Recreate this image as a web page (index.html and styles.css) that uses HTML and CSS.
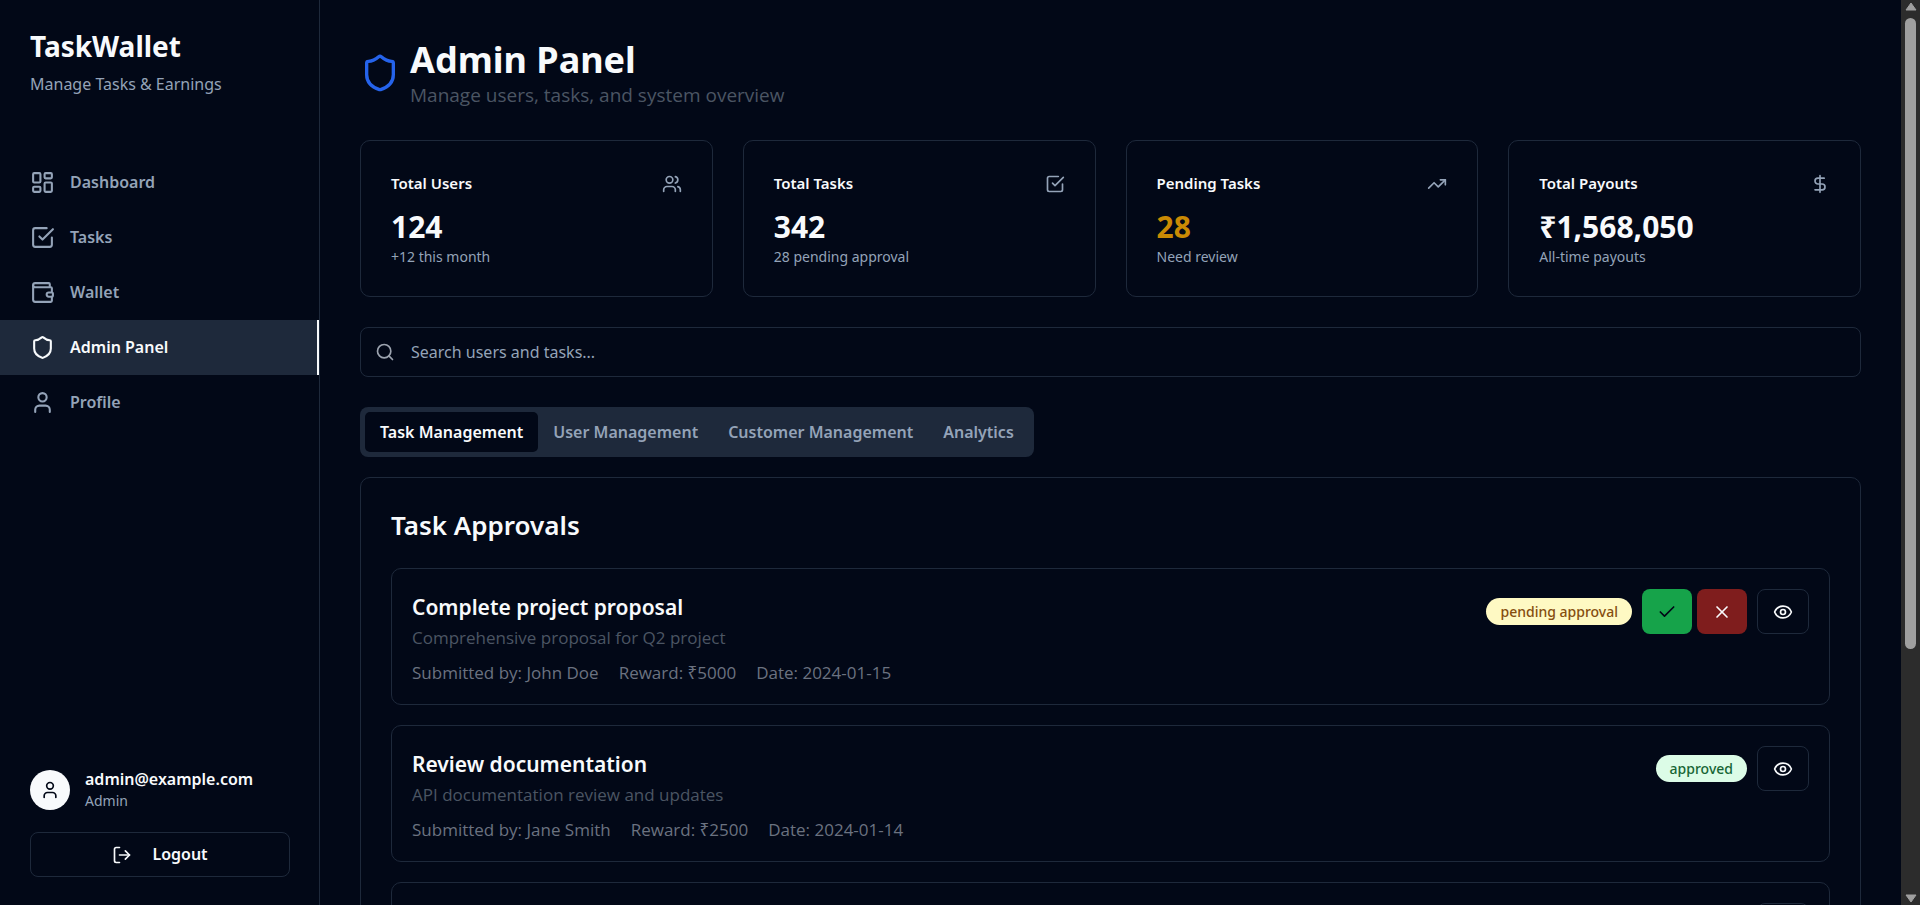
FILE: index.html
```html
<!DOCTYPE html>
<html lang="en">
<head>
<meta charset="utf-8">
<meta name="viewport" content="width=device-width, initial-scale=1">
<title>TaskWallet – Admin Panel</title>
<link rel="stylesheet" href="styles.css">
</head>
<body>
<svg class="sprite" aria-hidden="true">
  <symbol id="i-dashboard" viewBox="0 0 24 24"><rect width="7" height="9" x="3" y="3" rx="1"/><rect width="7" height="5" x="14" y="3" rx="1"/><rect width="7" height="9" x="14" y="12" rx="1"/><rect width="7" height="5" x="3" y="16" rx="1"/></symbol>
  <symbol id="i-check-square" viewBox="0 0 24 24"><path d="m9 11 3 3L22 4"/><path d="M21 12v7a2 2 0 0 1-2 2H5a2 2 0 0 1-2-2V5a2 2 0 0 1 2-2h11"/></symbol>
  <symbol id="i-wallet" viewBox="0 0 24 24"><path d="M19 7V4a1 1 0 0 0-1-1H5a2 2 0 0 0 0 4h15a1 1 0 0 1 1 1v4h-3a2 2 0 0 0 0 4h3a1 1 0 0 0 1-1v-2a1 1 0 0 0-1-1"/><path d="M3 5v14a2 2 0 0 0 2 2h15a1 1 0 0 0 1-1v-4"/></symbol>
  <symbol id="i-shield" viewBox="0 0 24 24"><path d="M20 13c0 5-3.5 7.5-7.66 8.95a1 1 0 0 1-.67-.01C7.5 20.5 4 18 4 13V6a1 1 0 0 1 1-1c2 0 4.5-1.2 6.24-2.72a1.17 1.17 0 0 1 1.52 0C14.51 3.81 17 5 19 5a1 1 0 0 1 1 1z"/></symbol>
  <symbol id="i-user" viewBox="0 0 24 24"><path d="M19 21v-2a4 4 0 0 0-4-4H9a4 4 0 0 0-4 4v2"/><circle cx="12" cy="7" r="4"/></symbol>
  <symbol id="i-users" viewBox="0 0 24 24"><path d="M16 21v-2a4 4 0 0 0-4-4H6a4 4 0 0 0-4 4v2"/><circle cx="9" cy="7" r="4"/><path d="M22 21v-2a4 4 0 0 0-3-3.87"/><path d="M16 3.13a4 4 0 0 1 0 7.75"/></symbol>
  <symbol id="i-trend" viewBox="0 0 24 24"><path d="M22 7l-8.500 8.500-5-5L2 17"/><path d="M16 7h6v6"/></symbol>
  <symbol id="i-dollar" viewBox="0 0 24 24"><path d="M12 2v20"/><path d="M17 5H9.500a3.500 3.500 0 0 0 0 7h5a3.500 3.500 0 0 1 0 7H6"/></symbol>
  <symbol id="i-search" viewBox="0 0 24 24"><circle cx="11" cy="11" r="8"/><path d="m21 21-4.300-4.300"/></symbol>
  <symbol id="i-logout" viewBox="0 0 24 24"><path d="M9 21H5a2 2 0 0 1-2-2V5a2 2 0 0 1 2-2h4"/><path d="m16 17 5-5-5-5"/><path d="M21 12H9"/></symbol>
  <symbol id="i-check" viewBox="0 0 24 24"><path d="M20 6 9 17l-5-5"/></symbol>
  <symbol id="i-x" viewBox="0 0 24 24"><path d="M18 6 6 18"/><path d="m6 6 12 12"/></symbol>
  <symbol id="i-eye" viewBox="0 0 24 24"><path d="M2.062 12.348a1 1 0 0 1 0-.696 10.750 10.750 0 0 1 19.876 0 1 1 0 0 1 0 .696 10.750 10.750 0 0 1-19.876 0"/><circle cx="12" cy="12" r="3"/></symbol>
</svg>
<div class="app">
  <aside class="sidebar">
    <div class="brand">
      <div class="brand-name">TaskWallet</div>
      <div class="brand-tag">Manage Tasks &amp; Earnings</div>
    </div>
    <nav class="nav">
      <a class="nav-link" href="#dashboard"><svg class="icon icon-nav"><use href="#i-dashboard"/></svg>Dashboard</a>
      <a class="nav-link" href="#tasks"><svg class="icon icon-nav"><use href="#i-check-square"/></svg>Tasks</a>
      <a class="nav-link" href="#wallet"><svg class="icon icon-nav"><use href="#i-wallet"/></svg>Wallet</a>
      <a class="nav-link active" href="#admin" aria-current="page"><svg class="icon icon-nav"><use href="#i-shield"/></svg>Admin Panel</a>
      <a class="nav-link" href="#profile"><svg class="icon icon-nav"><use href="#i-user"/></svg>Profile</a>
    </nav>
    <div class="account">
      <div class="account-row">
        <span class="avatar"><svg class="icon icon-sm"><use href="#i-user"/></svg></span>
        <div>
          <div class="account-email">admin@example.com</div>
          <div class="account-role">Admin</div>
        </div>
      </div>
      <button class="logout" type="button"><svg class="icon icon-sm"><use href="#i-logout"/></svg>Logout</button>
    </div>
  </aside>

  <main class="main">
    <header class="page-head">
      <svg class="icon icon-lg"><use href="#i-shield"/></svg>
      <div>
        <h1 class="page-title">Admin Panel</h1>
        <p class="page-sub">Manage users, tasks, and system overview</p>
      </div>
    </header>

    <section class="stats" aria-label="Overview">
      <article class="stat">
        <div class="stat-head"><h3 class="stat-title">Total Users</h3><svg class="icon icon-sm"><use href="#i-users"/></svg></div>
        <div class="stat-value">124</div>
        <p class="stat-note">+12 this month</p>
      </article>
      <article class="stat">
        <div class="stat-head"><h3 class="stat-title">Total Tasks</h3><svg class="icon icon-sm"><use href="#i-check-square"/></svg></div>
        <div class="stat-value">342</div>
        <p class="stat-note">28 pending approval</p>
      </article>
      <article class="stat">
        <div class="stat-head"><h3 class="stat-title">Pending Tasks</h3><svg class="icon icon-sm"><use href="#i-trend"/></svg></div>
        <div class="stat-value warn">28</div>
        <p class="stat-note">Need review</p>
      </article>
      <article class="stat">
        <div class="stat-head"><h3 class="stat-title">Total Payouts</h3><svg class="icon icon-sm"><use href="#i-dollar"/></svg></div>
        <div class="stat-value">₹1,568,050</div>
        <p class="stat-note">All-time payouts</p>
      </article>
    </section>

    <label class="search">
      <svg class="icon icon-sm"><use href="#i-search"/></svg>
      <input class="search-input" type="text" placeholder="Search users and tasks..." aria-label="Search users and tasks">
    </label>

    <div class="tabs" role="tablist">
      <button class="tab selected" type="button" role="tab" aria-selected="true">Task Management</button>
      <button class="tab" type="button" role="tab" aria-selected="false">User Management</button>
      <button class="tab" type="button" role="tab" aria-selected="false">Customer Management</button>
      <button class="tab" type="button" role="tab" aria-selected="false">Analytics</button>
    </div>

    <section class="panel">
      <h2 class="panel-title">Task Approvals</h2>
      <div class="tasks">
        <article class="task">
          <div class="task-body">
            <h3 class="task-title">Complete project proposal</h3>
            <p class="task-desc">Comprehensive proposal for Q2 project</p>
            <div class="task-meta"><span>Submitted by: John Doe</span><span>Reward: ₹5000</span><span>Date: 2024-01-15</span></div>
          </div>
          <div class="task-actions">
            <span class="badge pending">pending approval</span>
            <div class="decide">
              <button class="btn approve" type="button" aria-label="Approve"><svg class="icon icon-sm"><use href="#i-check"/></svg></button>
              <button class="btn reject" type="button" aria-label="Reject"><svg class="icon icon-sm"><use href="#i-x"/></svg></button>
            </div>
            <button class="btn view" type="button" aria-label="View"><svg class="icon icon-sm"><use href="#i-eye"/></svg></button>
          </div>
        </article>
        <article class="task">
          <div class="task-body">
            <h3 class="task-title">Review documentation</h3>
            <p class="task-desc">API documentation review and updates</p>
            <div class="task-meta"><span>Submitted by: Jane Smith</span><span>Reward: ₹2500</span><span>Date: 2024-01-14</span></div>
          </div>
          <div class="task-actions">
            <span class="badge approved">approved</span>
            <button class="btn view" type="button" aria-label="View"><svg class="icon icon-sm"><use href="#i-eye"/></svg></button>
          </div>
        </article>
        <article class="task">
          <div class="task-body"></div>
          <div class="task-actions">
            <button class="btn view" type="button" aria-label="View"><svg class="icon icon-sm"><use href="#i-eye"/></svg></button>
          </div>
        </article>
      </div>
    </section>
  </main>

  <div class="scrollbar" aria-hidden="true">
    <svg class="arrow" viewBox="0 0 14 10"><path d="M7 1 12 8H2z"/></svg>
    <div class="track"><div class="thumb"></div></div>
    <svg class="arrow" viewBox="0 0 14 10"><path d="M7 9 2 2h10z"/></svg>
  </div>
</div>
</body>
</html>
```
FILE: styles.css
```css
:root {
  --bg: #020817;
  --fg: #f8fafc;
  --muted: #94a3b8;
  --line: #1e293b;
  --dim: #4b5563;
  --meta: #6b7280;
  --font-light: "Segoe UI", "Open Sans", "Noto Sans", sans-serif;
}

* { box-sizing: border-box; }

body {
  margin: 0;
  background: var(--bg);
  color: var(--fg);
  font-family: "Segoe UI", "Noto Sans", "Open Sans", sans-serif;
  font-size: 16px;
  line-height: 25px;
}

h1, h2, h3, p { margin: 0; }
button, input { font: inherit; color: inherit; }
button { cursor: pointer; }

.sprite { display: none; }

.icon {
  flex: none;
  fill: none;
  stroke: currentColor;
  stroke-width: 2;
  stroke-linecap: round;
  stroke-linejoin: round;
}
.icon-sm { width: 20px; height: 20px; }
.icon-nav { width: 25px; height: 25px; }
.icon-lg { width: 40px; height: 40px; color: #2563eb; }

.app {
  display: grid;
  grid-template-columns: 320px minmax(0, 1fr) 19px;
  height: 100vh;
}

/* Sidebar */
.sidebar {
  display: flex;
  flex-direction: column;
  border-right: 1px solid var(--line);
}
.brand { padding: 26px 30px 0; }
.brand-name { font-size: 28px; font-weight: 700; line-height: 40px; }
.brand-tag { color: var(--muted); line-height: 36px; }
.nav { flex: 1; padding-top: 53px; }
.nav-link {
  display: flex;
  align-items: center;
  gap: 15px;
  height: 55px;
  padding: 0 30px;
  color: var(--muted);
  font-weight: 600;
  text-decoration: none;
}
.nav-link.active {
  background: var(--line);
  color: var(--fg);
  border-right: 2px solid var(--fg);
}
.account { padding: 0 29px 28px 30px; }
.account-row { display: flex; align-items: center; gap: 15px; margin-bottom: 20px; }
.avatar {
  display: grid;
  place-items: center;
  width: 40px;
  height: 40px;
  border-radius: 50%;
  background: var(--fg);
  color: var(--bg);
}
.account-email { font-weight: 600; line-height: 22px; }
.account-role { color: var(--muted); font-size: 14px; line-height: 22px; }
.logout {
  display: flex;
  align-items: center;
  justify-content: center;
  gap: 20px;
  width: 100%;
  height: 45px;
  border: 1px solid var(--line);
  border-radius: 8px;
  background: transparent;
  font-weight: 600;
}

/* Main column */
.main {
  padding: 40px;
  overflow-y: auto;
  scrollbar-width: none;
}
.page-head { display: flex; align-items: center; gap: 10px; margin-bottom: 35px; }
.page-title { font-size: 36px; font-weight: 700; line-height: 40px; }
.page-sub {
  margin-top: 5px;
  color: var(--dim);
  font-family: var(--font-light);
  font-size: 19px;
  line-height: 20px;
}

.stats {
  display: grid;
  grid-template-columns: repeat(4, minmax(0, 1fr));
  gap: 30px;
  margin-bottom: 30px;
}
.stat {
  padding: 30px 30px 29px;
  border: 1px solid var(--line);
  border-radius: 10px;
}
.stat-head {
  display: flex;
  align-items: center;
  justify-content: space-between;
  margin-bottom: 11px;
  color: var(--muted);
}
.stat-title { color: var(--fg); font-size: 15px; font-weight: 600; }
.stat-value { font-size: 30px; font-weight: 700; line-height: 40px; }
.stat-value.warn { color: #ca8a04; }
.stat-note { color: var(--muted); font-size: 14px; line-height: 20px; }

.search {
  display: flex;
  align-items: center;
  gap: 16px;
  height: 50px;
  margin-bottom: 30px;
  padding: 0 14px;
  border: 1px solid var(--line);
  border-radius: 8px;
  color: #9ca3af;
}
.search-input {
  flex: 1;
  min-width: 0;
  padding: 0;
  border: 0;
  outline: 0;
  background: transparent;
  color: var(--fg);
}
.search-input::placeholder { color: var(--muted); opacity: 1; }

.tabs {
  display: flex;
  width: fit-content;
  height: 50px;
  margin-bottom: 20px;
  padding: 5px;
  border-radius: 8px;
  background: var(--line);
}
.tab {
  padding: 0 15px;
  border: 0;
  border-radius: 5px;
  background: transparent;
  color: var(--muted);
  font-weight: 600;
}
.tab.selected { background: var(--bg); color: var(--fg); }

.panel {
  padding: 30px;
  border: 1px solid var(--line);
  border-radius: 10px;
}
.panel-title { margin-bottom: 25px; font-size: 26px; font-weight: 600; line-height: 35px; }
.tasks { display: flex; flex-direction: column; gap: 20px; }
.task {
  display: flex;
  align-items: flex-start;
  justify-content: space-between;
  min-height: 137px;
  padding: 20px 20px 19px;
  border: 1px solid var(--line);
  border-radius: 10px;
}
.task-title { font-size: 21px; font-weight: 600; line-height: 36px; }
.task-desc,
.task-meta { font-family: var(--font-light); font-size: 17px; }
.task-desc { color: var(--dim); }
.task-meta { display: flex; gap: 20px; margin-top: 10px; color: var(--meta); }
.task-actions { display: flex; align-items: center; gap: 10px; }
.decide { display: flex; gap: 5px; }
.badge {
  padding: 0 14px;
  border-radius: 14px;
  font-size: 14px;
  font-weight: 500;
  line-height: 27px;
}
.badge.pending { background: #fef9c3; color: #854d0e; }
.badge.approved { background: #dcfce7; color: #166534; }
.btn {
  display: grid;
  place-items: center;
  width: 50px;
  height: 45px;
  padding: 0;
  border: 0;
  border-radius: 8px;
  background: transparent;
}
.btn.approve { background: #16a34a; color: var(--bg); }
.btn.reject { background: #7f1d1d; color: var(--fg); }
.btn.view { width: 52px; border: 1px solid var(--line); }

/* Scrollbar */
.scrollbar {
  display: flex;
  flex-direction: column;
  align-items: center;
  padding: 2px 0;
  background: #2c2c2c;
}
.arrow {
  width: 14px;
  height: 10px;
  fill: #9f9f9f;
  stroke: #9f9f9f;
  stroke-linejoin: round;
}
.track { flex: 1; padding: 6px 0 10px; }
.thumb { width: 11px; height: 73%; border-radius: 6px; background: #9f9f9f; }
```
